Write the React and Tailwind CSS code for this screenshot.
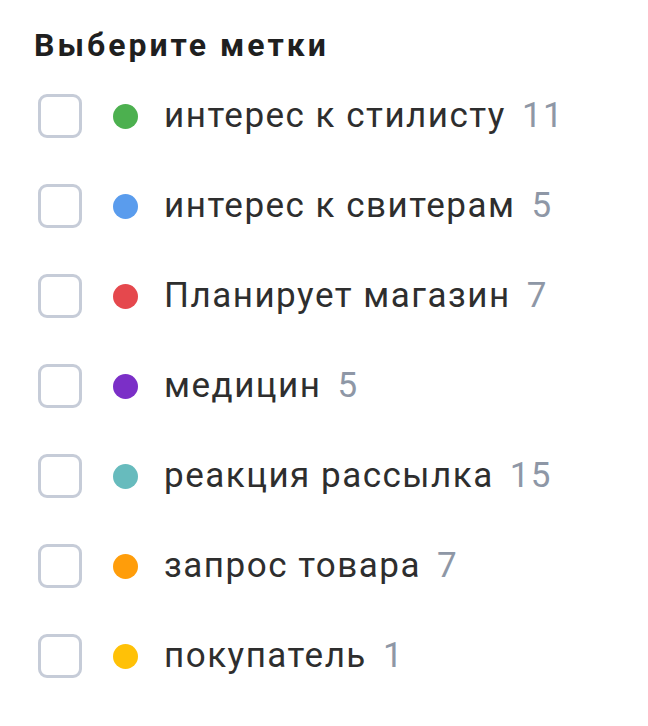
import React from 'react';

const tags = [
  { name: 'интерес к стилисту', count: 11, color: 'bg-[#4cb04f]' },
  { name: 'интерес к свитерам', count: 5, color: 'bg-[#5a9ced]' },
  { name: 'Планирует магазин', count: 7, color: 'bg-[#e5484d]' },
  { name: 'медицин', count: 5, color: 'bg-[#7b2fc7]' },
  { name: 'реакция рассылка', count: 15, color: 'bg-[#67bbbd]' },
  { name: 'запрос товара', count: 7, color: 'bg-[#ff9d0a]' },
  { name: 'покупатель', count: 1, color: 'bg-[#ffc107]' },
];

const App = () => {
  return (
    <div className="min-h-screen bg-white pl-[34px] pt-[26px] font-['Roboto',sans-serif]">
      <h2 className="text-[32px] font-bold leading-[38px] tracking-[3px] text-[#1f1f1f]">Выберите метки</h2>
      <div className="mt-[7px] flex flex-col">
        {tags.map((t) => (
          <label key={t.name} className="flex h-[90px] items-center">
            <span className="ml-[4px] h-[44px] w-[44px] shrink-0 rounded-[9px] border-[3px] border-[#c6ccd8] bg-white" />
            <span className={`ml-[31px] h-[25px] w-[25px] shrink-0 rounded-full ${t.color}`} />
            <span className="ml-[26px] text-[35px] tracking-[1.5px] text-[#2e2e2e]">{t.name}</span>
            <span className="ml-[16px] text-[35px] tracking-[1.5px] text-[#8e97a6]">{t.count}</span>
          </label>
        ))}
      </div>
    </div>
  );
};

export default App;
